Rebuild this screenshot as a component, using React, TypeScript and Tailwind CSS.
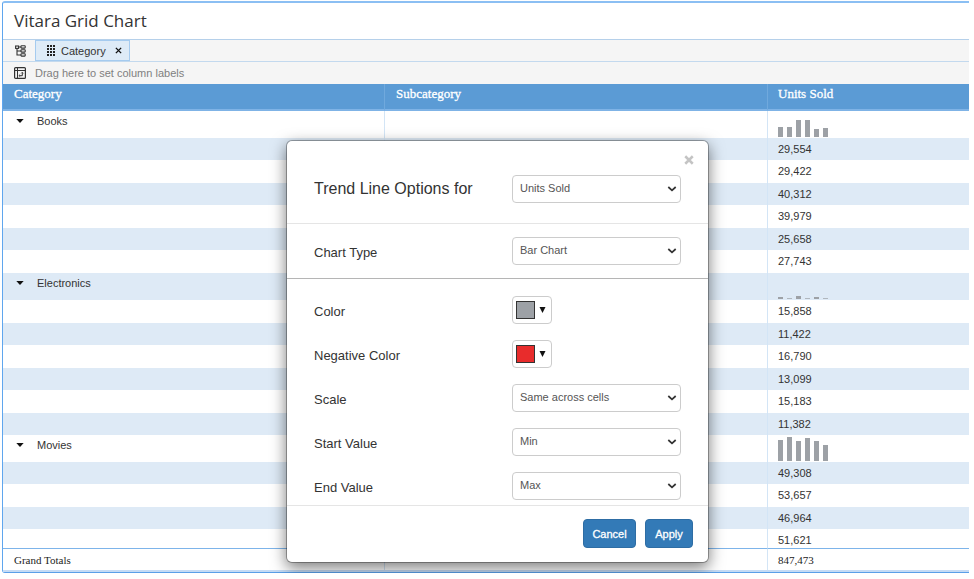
import React from "react";

type Group = { name: string; rows: string[]; bars: number[] };

const groups: Group[] = [
  {
    name: "Books",
    rows: ["29,554", "29,422", "40,312", "39,979", "25,658", "27,743"],
    bars: [10, 10, 17, 17, 8, 9],
  },
  {
    name: "Electronics",
    rows: ["15,858", "11,422", "16,790", "13,099", "15,183", "11,382"],
    bars: [2, 1, 3, 1, 2, 1],
  },
  {
    name: "Movies",
    rows: ["49,308", "53,657", "46,964", "51,621"],
    bars: [21, 24, 20, 23, 20, 16],
  },
];

function Sparkline({ bars }: { bars: number[] }) {
  return (
    <svg width="52" height="25" viewBox="0 0 52 25" className="block" aria-hidden="true">
      {bars.map((h, i) => (
        <rect key={i} x={i * 9} y={25 - h} width="5" height={h} fill="#9da1a6" opacity={h === 1 ? 0.7 : 1} />
      ))}
    </svg>
  );
}

function HierarchyIcon() {
  return (
    <svg width="11" height="12" viewBox="0 0 11 12" fill="none" stroke="#333" strokeWidth="1.1" className="block" aria-hidden="true">
      <rect x="0.6" y="1" width="3" height="2.4" />
      <path d="M2 3.5V10H6M2 6H6M3.5 2H6" />
      <rect x="6" y="0.8" width="4.2" height="2.3" rx="0.5" />
      <rect x="6" y="4.8" width="4.2" height="2.3" rx="0.5" />
      <rect x="6" y="8.8" width="4.2" height="2.3" rx="0.5" />
    </svg>
  );
}

function PivotIcon() {
  return (
    <svg width="12" height="12" viewBox="0 0 12 12" fill="none" stroke="#333" className="block" aria-hidden="true">
      <rect x="0.6" y="0.6" width="10.8" height="10.8" rx="1" strokeWidth="1.2" />
      <path d="M0.6 3.5H11.4M3.5 0.6V11.4" />
      <path d="M5.2 8.7H8.3V5.6" />
      <path d="M7.1 6.4L8.3 5.2L9.5 6.4M6 7.6L4.9 8.7L6 9.8" strokeWidth="0.8" />
    </svg>
  );
}

function GripIcon() {
  return (
    <svg width="9" height="11" viewBox="0 0 9 11" fill="#222" className="block" aria-hidden="true">
      {[0, 3, 6].map((x) => [0, 3, 6, 9].map((y) => <rect key={`${x}-${y}`} x={x} y={y} width="2" height="2" />))}
    </svg>
  );
}

function Cross({ size, color, width }: { size: number; color: string; width: number }) {
  return (
    <svg width={size} height={size} viewBox="0 0 8 8" stroke={color} strokeWidth={width} className="block" aria-hidden="true">
      <path d="M1 1L7 7M7 1L1 7" />
    </svg>
  );
}

const shaded = "bg-[#deeaf6]";
const cellLine = "border-l border-[#d3e5f6]";

function GridTable() {
  let index = 0;
  return (
    <table className="w-full table-fixed border-separate border-spacing-0 text-left text-[11px] leading-4 text-[#333]">
      <colgroup>
        <col className="w-[381px]" />
        <col className="w-[383px]" />
        <col />
      </colgroup>
      <thead>
        <tr className="bg-[#5b9bd5] font-['Liberation_Serif',serif] text-[13px] leading-4 text-white [-webkit-text-stroke:0.3px_white]">
          <th className="h-[27px] border-b-2 border-b-[#7fb3e6] pt-[2px] pl-[11px] align-top font-normal">Category</th>
          <th className="border-b-2 border-l border-b-[#7fb3e6] border-l-[#70a9dd] pt-[2px] pl-[11px] align-top font-normal">Subcategory</th>
          <th className="border-b-2 border-l border-b-[#7fb3e6] border-l-[#70a9dd] pt-[2px] pl-[10px] align-top font-normal">Units Sold</th>
        </tr>
      </thead>
      <tbody>
        {groups.map((g) => {
          const groupShade = index++ % 2 === 1;
          return (
            <React.Fragment key={g.name}>
              <tr className={groupShade ? shaded : "bg-white"}>
                <td className="h-[27px] pt-[2px] pl-[13px] align-top">
                  <div className="flex items-center gap-[13px]">
                    <button type="button" aria-label={`Collapse ${g.name}`} className="flex w-2 justify-center">
                      <svg width="8" height="4" viewBox="0 0 8 4" fill="#111" aria-hidden="true">
                        <path d="M0.3 0H7.7L4 4Z" />
                      </svg>
                    </button>
                    <span>{g.name}</span>
                  </div>
                </td>
                <td className={cellLine}></td>
                <td className={`${cellLine} pb-[1px] pl-[10px] align-bottom`}>
                  <Sparkline bars={g.bars} />
                </td>
              </tr>
              {g.rows.map((v) => {
                const shade = index++ % 2 === 1;
                const last = v === "51,621";
                return (
                  <tr key={v} className={shade ? shaded : "bg-white"}>
                    <td className={last ? "h-[19px]" : shade ? "h-[22px]" : "h-[23px]"}></td>
                    <td className={cellLine}></td>
                    <td className={`${cellLine} pt-[3px] pl-[10px] align-top`}>{v}</td>
                  </tr>
                );
              })}
            </React.Fragment>
          );
        })}
      </tbody>
      <tfoot>
        <tr className="font-['Liberation_Serif',serif] text-[#222]">
          <td className="h-[22px] border-t border-[#7db4ea] pt-[3px] pl-[11px] align-top">Grand Totals</td>
          <td className="border-t border-l border-t-[#7db4ea] border-l-[#d3e5f6]"></td>
          <td className="border-t border-l border-t-[#7db4ea] border-l-[#d3e5f6] pt-[3px] pl-[10px] align-top">847,473</td>
        </tr>
      </tfoot>
    </table>
  );
}

function Select({ id, options }: { id: string; options: string[] }) {
  return (
    <div className="relative w-[169px]">
      <select
        id={id}
        className="block h-7 w-full appearance-none rounded-[4px] border border-[#ccc] bg-white pb-[2px] pl-[7px] text-[11px] leading-4 text-[#555]"
      >
        {options.map((o) => (
          <option key={o}>{o}</option>
        ))}
      </select>
      <svg
        width="10"
        height="6"
        viewBox="0 0 10 6"
        fill="none"
        stroke="#333"
        strokeWidth="1.7"
        className="pointer-events-none absolute top-[11px] right-1"
        aria-hidden="true"
      >
        <path d="M1.3 1L5 4.4L8.7 1" />
      </svg>
    </div>
  );
}

function ColorButton({ id, label, swatch }: { id: string; label: string; swatch: string }) {
  return (
    <button
      id={id}
      type="button"
      aria-label={label}
      className="flex h-7 w-10 items-center gap-1 rounded-[4px] border border-[#ccc] bg-white pb-[1px] pl-[3px]"
    >
      <span className={`h-[18px] w-[19px] border border-[#333] ${swatch}`}></span>
      <svg width="7" height="6" viewBox="0 0 7 6" fill="#111" aria-hidden="true">
        <path d="M0.5 0H6.5L3.5 6Z" />
      </svg>
    </button>
  );
}

function Row({ id, label, children }: { id: string; label: string; children: React.ReactNode }) {
  return (
    <div className="flex items-center">
      <label htmlFor={id} className="w-[198px] pt-1 text-[13px] leading-4">
        {label}
      </label>
      {children}
    </div>
  );
}

function TrendDialog() {
  return (
    <div
      role="dialog"
      aria-labelledby="trend-title"
      className="absolute top-[140px] left-[286px] w-[423px] rounded-md border border-black/30 bg-white bg-clip-padding text-[#333] shadow-[0_5px_15px_rgba(0,0,0,0.5)]"
    >
      <button type="button" aria-label="Close" className="absolute top-[14px] right-[14px]">
        <Cross size={10} color="#c4c4c4" width={2} />
      </button>
      <div className="flex items-center border-b border-[#e5e5e5] pt-[34px] pb-5 pl-[27px]">
        <label id="trend-title" htmlFor="metric" className="w-[198px] text-base leading-5">
          Trend Line Options for
        </label>
        <Select id="metric" options={["Units Sold"]} />
      </div>
      <div className="border-b border-[#b5b5b5] pt-[13px] pb-[13px] pl-[27px]">
        <Row id="chart-type" label="Chart Type">
          <Select id="chart-type" options={["Bar Chart"]} />
        </Row>
      </div>
      <div className="flex flex-col gap-4 border-b border-[#e5e5e5] pt-[17px] pb-[5px] pl-[27px]">
        <Row id="color" label="Color">
          <ColorButton id="color" label="Color" swatch="bg-[#9da1a6]" />
        </Row>
        <Row id="negative" label="Negative Color">
          <ColorButton id="negative" label="Negative Color" swatch="bg-[#e82c2c]" />
        </Row>
        <Row id="scale" label="Scale">
          <Select id="scale" options={["Same across cells"]} />
        </Row>
        <Row id="start" label="Start Value">
          <Select id="start" options={["Min"]} />
        </Row>
        <Row id="end" label="End Value">
          <Select id="end" options={["Max"]} />
        </Row>
      </div>
      <div className="flex justify-end gap-[9px] pt-[13px] pr-[15px] pb-[14px] text-[11px] leading-4 text-white">
        <button type="button" className="h-[29px] w-[53px] rounded-[4px] border border-[#2e6da4] bg-[#337ab7] [-webkit-text-stroke:0.3px_white]">
          Cancel
        </button>
        <button type="button" className="h-[29px] w-[48px] rounded-[4px] border border-[#2e6da4] bg-[#337ab7] [-webkit-text-stroke:0.3px_white]">
          Apply
        </button>
      </div>
    </div>
  );
}

export default function App() {
  return (
    <div className="relative bg-white pt-px pr-[5px] pl-[2px] font-['Liberation_Sans',sans-serif]">
      <main className="rounded-l-[3px] border-t-2 border-b border-l border-t-[#8bbff3] border-b-[#5a9fe8] border-l-[#5fa6ee] bg-white">
        <h1 className="h-9 pt-[6px] pl-[11px] font-['Open_Sans',sans-serif] text-[17px] leading-6 text-[#333]">Vitara Grid Chart</h1>
        <div className="flex h-[22px] items-center border-t border-[#b5d0ea] bg-[#f5f5f5] pl-[12px]">
          <HierarchyIcon />
          <div className="ml-[9px] flex h-[21px] items-center border border-[#a5cbef] bg-[#deebf7] pr-[7px] pl-[11px] text-[11px] leading-4 text-[#333]">
            <GripIcon />
            <span className="ml-[5px]">Category</span>
            <button type="button" aria-label="Remove Category" className="ml-[9px]">
              <Cross size={7} color="#111" width={1.6} />
            </button>
          </div>
        </div>
        <div className="flex h-[23px] items-center gap-[9px] border-t border-[#c3d9ee] bg-[#f5f5f5] pl-[11px] text-[11px] leading-4 text-[#808080]">
          <PivotIcon />
          <span>Drag here to set column labels</span>
        </div>
        <GridTable />
        <div className="h-[2px] bg-[#c5dbf5]"></div>
      </main>
      <TrendDialog />
    </div>
  );
}
